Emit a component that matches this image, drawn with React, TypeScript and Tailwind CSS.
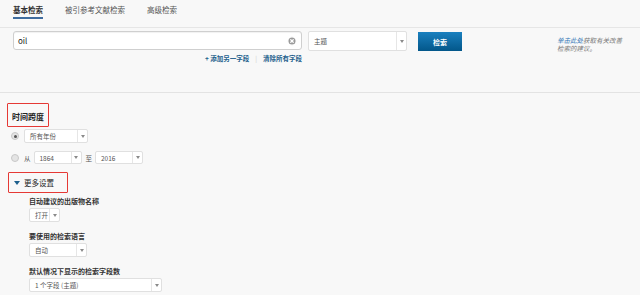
import { CircleX } from "lucide-react";

function Arrow() {
  return <div className="h-0 w-0 border-x-[2.5px] border-t-[3px] border-x-transparent border-t-[#8a8a8a]" />;
}

function Select({ label, className }: { label: string; className: string }) {
  return (
    <div className={`flex items-center rounded-[2px] border border-[#e0e0e0] bg-white ${className}`}>
      <span className="flex-1 truncate pl-[5px] text-[6.5px] leading-[10px] text-[#555]">{label}</span>
      <div className="flex h-full w-[10px] items-center justify-center border-l border-[#e6e6e6]">
        <Arrow />
      </div>
    </div>
  );
}

function Radio({ checked }: { checked?: boolean }) {
  return (
    <div className="flex h-[8px] w-[8px] items-center justify-center rounded-full border border-[#c8c8c8] bg-[#e4e4e4]">
      {checked && <div className="h-[3px] w-[3px] rounded-full bg-[#555]" />}
    </div>
  );
}

const tabs = ["基本检索", "被引参考文献检索", "高级检索"];

export default function App() {
  return (
    <div className="h-[295px] w-[640px] overflow-hidden bg-[#f8f8f8] font-['Noto_Sans_CJK_SC','Liberation_Sans',sans-serif] text-[#333]">
      <div className="flex h-[28px] gap-[22px] border-b border-[#e6e6e6] pl-[13px] pt-[6px]">
        {tabs.map((t, i) => (
          <div
            key={t}
            className={`h-[13px] text-[7.5px] leading-[8px] ${
              i === 0 ? "border-b-2 border-[#3f6c9e] font-bold text-[#333]" : "text-[#555]"
            }`}
          >
            {t}
          </div>
        ))}
      </div>

      <div className="h-[65px] border-b border-[#e3e3e3] pl-[13px] pt-[3px]">
        <div className="flex items-start">
          <div className="flex w-[289px] flex-col">
            <div className="flex h-[19px] items-center rounded-[3px] border border-[#cfcfcf] bg-white pl-[4px] pr-[4px] shadow-[inset_0_1px_1px_rgba(0,0,0,0.06)]">
              <span className="flex-1 text-[8px] leading-[10px] text-[#222]">oil</span>
              <CircleX size={10} className="fill-[#9a9a9a] text-white" strokeWidth={3} />
            </div>
            <div className="mt-[4px] flex justify-end gap-[6px] text-[6.5px] font-bold leading-[8px] text-[#1d5f8c]">
              <span>+ 添加另一字段</span>
              <span className="font-normal text-[#cccccc]">|</span>
              <span>清除所有字段</span>
            </div>
          </div>
          <Select label="主题" className="ml-[6px] h-[20px] w-[99px]" />
          <button className="ml-[11px] mt-[1px] h-[19px] w-[44px] bg-gradient-to-b from-[#1a80bf] to-[#03578a] text-[7px] font-bold leading-[10px] text-white">
            检索
          </button>
          <p className="ml-[95px] mt-[5px] w-[70px] text-[6.5px] italic leading-[8px] text-[#7a7a7a]">
            <a className="text-[#2f74b5]">单击此处</a>获取有关改善检索的建议。
          </p>
        </div>
      </div>

      <div className="pl-[7px] pt-[10px]">
        <div className="flex h-[24px] w-[42px] items-center justify-center rounded-[1px] border-[1.5px] border-[#e53935] pt-[3px]">
          <span className="text-[8px] font-bold leading-[10px] text-[#222]">时间跨度</span>
        </div>
        <div className="mt-[2px] flex items-center pl-[4px]">
          <Radio checked />
          <Select label="所有年份" className="ml-[5px] h-[14px] w-[64px]" />
        </div>
        <div className="mt-[8px] flex items-center pl-[4px] text-[6.5px] leading-[10px] text-[#555]">
          <Radio />
          <span className="ml-[5px]">从</span>
          <Select label="1864" className="ml-[3px] h-[13px] w-[48px]" />
          <span className="ml-[4px]">至</span>
          <Select label="2016" className="ml-[3px] h-[13px] w-[48px]" />
        </div>

        <div className="ml-[1px] mt-[8px] flex h-[21px] w-[60px] items-center gap-[4px] rounded-[1px] border-[1.5px] border-[#e53935] pl-[5px]">
          <div className="h-0 w-0 border-x-[3px] border-t-[4px] border-x-transparent border-t-[#1d5f8c]" />
          <span className="text-[7.5px] leading-[10px] text-[#222]">更多设置</span>
        </div>

        <div className="pl-[22px]">
          <div className="mt-[4px] text-[7px] font-bold leading-[9px] text-[#333]">自动建议的出版物名称</div>
          <Select label="打开" className="mt-[2px] h-[14px] w-[31px]" />
          <div className="mt-[10px] text-[7px] font-bold leading-[9px] text-[#333]">要使用的检索语言</div>
          <Select label="自动" className="mt-[2px] h-[14px] w-[58px]" />
          <div className="mt-[10px] text-[7px] font-bold leading-[9px] text-[#333]">默认情况下显示的检索字段数</div>
          <Select label="1 个字段 (主题)" className="mt-[2px] h-[14px] w-[133px]" />
        </div>
      </div>
    </div>
  );
}
